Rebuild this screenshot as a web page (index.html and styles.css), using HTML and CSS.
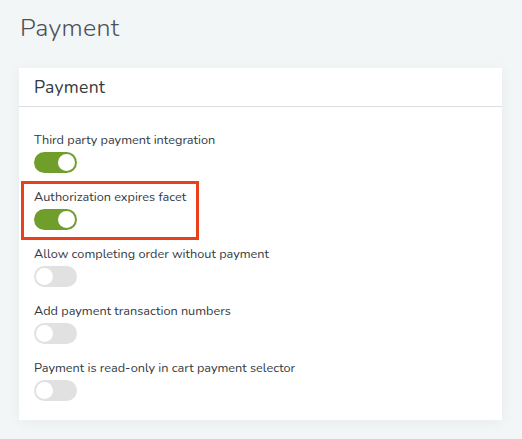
FILE: index.html
```html
<!DOCTYPE html>
<html>
<head>
<meta charset="utf-8">
<link rel="stylesheet" href="styles.css">
</head>
<body>
<div class="page">
  <h1 class="title">Payment</h1>
  <section class="card">
    <div class="card-header">Payment</div>
    <div class="card-body">
      <div class="field">
        <div class="label">Third party payment integration</div>
        <span class="toggle on"><span class="knob"></span></span>
      </div>
      <div class="field highlight">
        <div class="label">Authorization expires facet</div>
        <span class="toggle on"><span class="knob"></span></span>
      </div>
      <div class="field">
        <div class="label">Allow completing order without payment</div>
        <span class="toggle"><span class="knob"></span></span>
      </div>
      <div class="field">
        <div class="label">Add payment transaction numbers</div>
        <span class="toggle"><span class="knob"></span></span>
      </div>
      <div class="field">
        <div class="label">Payment is read-only in cart payment selector</div>
        <span class="toggle"><span class="knob"></span></span>
      </div>
    </div>
  </section>
</div>
</body>
</html>
```
FILE: styles.css
```css
html, body {
  margin: 0;
  padding: 0;
  background: #f3f6f7;
}
body {
  font-family: "Nunito", "Lato", "Open Sans", sans-serif;
  color: #333a3f;
}
.page {
  padding: 13px 20px 17px 19px;
}
.title {
  margin: 0 0 0 1px;
  font-size: 25px;
  font-weight: 300;
  line-height: 30px;
  color: #4a5156;
  letter-spacing: 0.3px;
}
.card {
  margin-top: 25px;
  background: #fff;
  box-shadow: 0 2px 12px rgba(40, 60, 70, 0.06);
}
.card-header {
  height: 38px;
  line-height: 39px;
  padding-left: 15px;
  font-size: 17.5px;
  color: #333a3f;
  border-bottom: 1px solid #dcdfe1;
  letter-spacing: 0.3px;
}
.card-body {
  padding: 24px 15px 19px 15px;
  display: flex;
  flex-direction: column;
}
.field {
  height: 57px;
  display: flex;
  flex-direction: column;
  align-items: flex-start;
  box-sizing: border-box;
}
.field:last-child {
  height: auto;
}
.field.highlight {
  margin: -7px 0 5px -13px;
  height: 59px;
  width: 178px;
  padding: 4px 0 0 10px;
  border: 3px solid #e8401c;
}
.label {
  font-size: 12.7px;
  line-height: 17px;
  color: #333a3f;
  margin-bottom: 4px;
}
.toggle {
  width: 43px;
  height: 21px;
  border-radius: 11px;
  background: #e1e1e1;
  display: flex;
  align-items: center;
  padding: 0 2px;
  box-sizing: border-box;
}
.toggle.on {
  background: #6f9e2b;
  justify-content: flex-end;
}
.knob {
  width: 17px;
  height: 17px;
  border-radius: 50%;
  background: #fff;
}
```
